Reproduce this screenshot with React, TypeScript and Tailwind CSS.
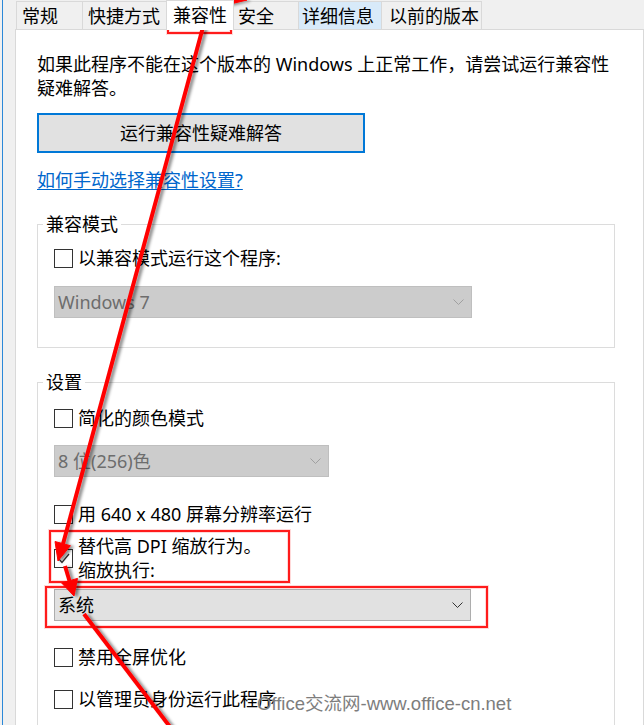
import React from "react";

const TABS = [
  { label: "常规", cls: "w-[66px] h-[28px] border-l bg-[#f0f0f0] pl-[5px]" },
  { label: "快捷方式", cls: "w-[84px] h-[28px] border-l bg-[#f0f0f0] pl-[5px]" },
  { label: "兼容性", cls: "relative z-10 -mb-px w-[68px] h-[30px] border-x bg-white pl-[6px] pb-[2px]" },
  { label: "安全", cls: "w-[64px] h-[28px] bg-[#f0f0f0] pl-[4px]" },
  { label: "详细信息", cls: "w-[83px] h-[28px] border-l bg-[#d8eaf9] pl-[3px]" },
  { label: "以前的版本", cls: "w-[101px] h-[28px] border-x bg-[#f0f0f0] pl-[7px]" },
];

function Chevron({ color }: { color: string }) {
  return (
    <svg width="11" height="6" viewBox="0 0 11 6" fill="none" aria-hidden="true">
      <path d="M0.5 0.5L5.5 5.5L10.5 0.5" stroke={color} strokeWidth="1" />
    </svg>
  );
}

function Checkbox({ checked }: { checked?: boolean }) {
  return (
    <span className="flex h-[19px] w-[19px] shrink-0 items-center justify-center border border-[#333333] bg-white">
      {checked && (
        <svg width="17" height="17" viewBox="0 0 17 17" fill="none" aria-hidden="true">
          <path d="M3.5 8.5L7 12.5L14 4" stroke="#333333" strokeWidth="1.3" />
        </svg>
      )}
    </span>
  );
}

function Option({ label, className = "" }: { label: string; className?: string }) {
  return (
    <div className={`flex h-[24px] items-center gap-[5px] ${className}`}>
      <Checkbox />
      <span className="whitespace-nowrap">{label}</span>
    </div>
  );
}

function Select({ value, className, disabled }: { value: string; className: string; disabled?: boolean }) {
  return (
    <div
      className={`flex h-[32px] items-center justify-between border pl-[3px] pr-[7px] ${
        disabled ? "border-[#bfbfbf] bg-[#cccccc] text-[#6d6d6d]" : "border-[#adadad] bg-[#e1e1e1] text-black"
      } ${className}`}
    >
      <span className="whitespace-nowrap">{value}</span>
      <Chevron color={disabled ? "#a0a0a0" : "#333333"} />
    </div>
  );
}

function Annotations() {
  return (
    <svg
      className="pointer-events-none absolute inset-0"
      width="644"
      height="725"
      viewBox="0 0 644 725"
      fill="none"
      aria-hidden="true"
    >
      <defs>
        <filter id="shadow" x="-20%" y="-20%" width="140%" height="140%">
          <feDropShadow dx="3" dy="1" stdDeviation="1.4" floodColor="#000" floodOpacity="0.45" />
        </filter>
      </defs>
      {/* highlight boxes */}
      <g stroke="#ff0000" strokeWidth="2">
        <rect x="168" y="-4" width="63" height="37" />
        <rect x="50" y="531" width="239" height="51" />
        <rect x="46" y="587" width="441" height="40" />
      </g>
      <g stroke="#ff6b6b" strokeWidth="4" opacity="0.25">
        <rect x="168" y="-4" width="63" height="37" />
        <rect x="50" y="531" width="239" height="51" />
        <rect x="46" y="587" width="441" height="40" />
      </g>
      {/* arrows */}
      <g filter="url(#shadow)" stroke="#ff0000" strokeWidth="4" fill="#ff0000">
        <line x1="203" y1="27" x2="63" y2="544" />
        <polygon points="58,561 70.4,545.7 55,541.5" strokeWidth="1" />
        <line x1="65" y1="566" x2="69.5" y2="581" />
        <polygon points="74,596 77.5,578.4 61.7,583" strokeWidth="1" />
        <line x1="84" y1="614" x2="180" y2="740" />
        <polygon points="222,0 247,0 226,5" strokeWidth="1" />
      </g>
    </svg>
  );
}

export default function App() {
  return (
    <div className="relative h-[725px] w-[644px] overflow-hidden bg-[#f0f0f0] font-['Noto_Sans','Noto_Sans_CJK_SC',sans-serif] text-[18px] leading-[24px] text-black">
      <div className="flex h-full">
        <div className="w-[2px]" />
        <div className="w-px bg-[#2b88d8]" />
        <div className="flex flex-1 flex-col pl-[12px]">
          <div className="flex h-[29px] items-end pl-px">
            {TABS.map((t) => (
              <div
                key={t.label}
                className={`flex shrink-0 items-center whitespace-nowrap border-t border-[#d9d9d9] ${t.cls}`}
              >
                {t.label}
              </div>
            ))}
          </div>

          <div className="flex-1 border-x border-t border-[#d9d9d9] bg-white pl-[21px] pt-[22px]">
            <p className="whitespace-nowrap">
              如果此程序不能在这个版本的 Windows 上正常工作，请尝试运行兼容性
              <br />
              疑难解答。
            </p>

            <button className="mt-[13px] flex h-[40px] w-[328px] items-center justify-center border-2 border-[#0078d7] bg-[#e1e1e1]">
              运行兼容性疑难解答
            </button>

            <a href="#" className="mt-[15px] block w-fit text-[#0066cc] underline underline-offset-2">
              如何手动选择兼容性设置?
            </a>

            <fieldset className="mt-[20px] w-[578px] border border-[#dcdcdc] px-0 pb-[29px]">
              <legend className="ml-[5px] px-[3px]">兼容模式</legend>
              <div className="pl-[16px] pt-[10px]">
                <Option label="以兼容模式运行这个程序:" />
                <Select value="Windows 7" className="mt-[16px] w-[418px]" disabled />
              </div>
            </fieldset>

            <fieldset className="mt-[22px] w-[578px] border border-[#dcdcdc] px-0 pb-[40px]">
              <legend className="ml-[5px] px-[3px]">设置</legend>
              <div className="pl-[16px] pt-[12px]">
                <Option label="简化的颜色模式" />
                <Select value="8 位(256)色" className="mt-[15px] w-[275px]" disabled />
                <Option label="用 640 x 480 屏幕分辨率运行" className="mt-[25px]" />
                <div className="mt-[8px] flex items-center gap-[5px]">
                  <Checkbox checked />
                  <span className="whitespace-nowrap">
                    替代高 DPI 缩放行为。
                    <br />
                    缩放执行:
                  </span>
                </div>
                <Select value="系统" className="mt-[7px] w-[417px]" />
                <Option label="禁用全屏优化" className="mt-[24px]" />
                <Option label="以管理员身份运行此程序" className="mt-[18px]" />
              </div>
            </fieldset>
          </div>
        </div>
      </div>

      <Annotations />

      <span className="pointer-events-none absolute left-[257px] top-[695px] whitespace-nowrap font-['Liberation_Sans','Noto_Sans_CJK_SC',sans-serif] text-[18.5px] leading-none text-[#7d7d7d]">
        Office交流网-www.office-cn.net
      </span>
    </div>
  );
}
